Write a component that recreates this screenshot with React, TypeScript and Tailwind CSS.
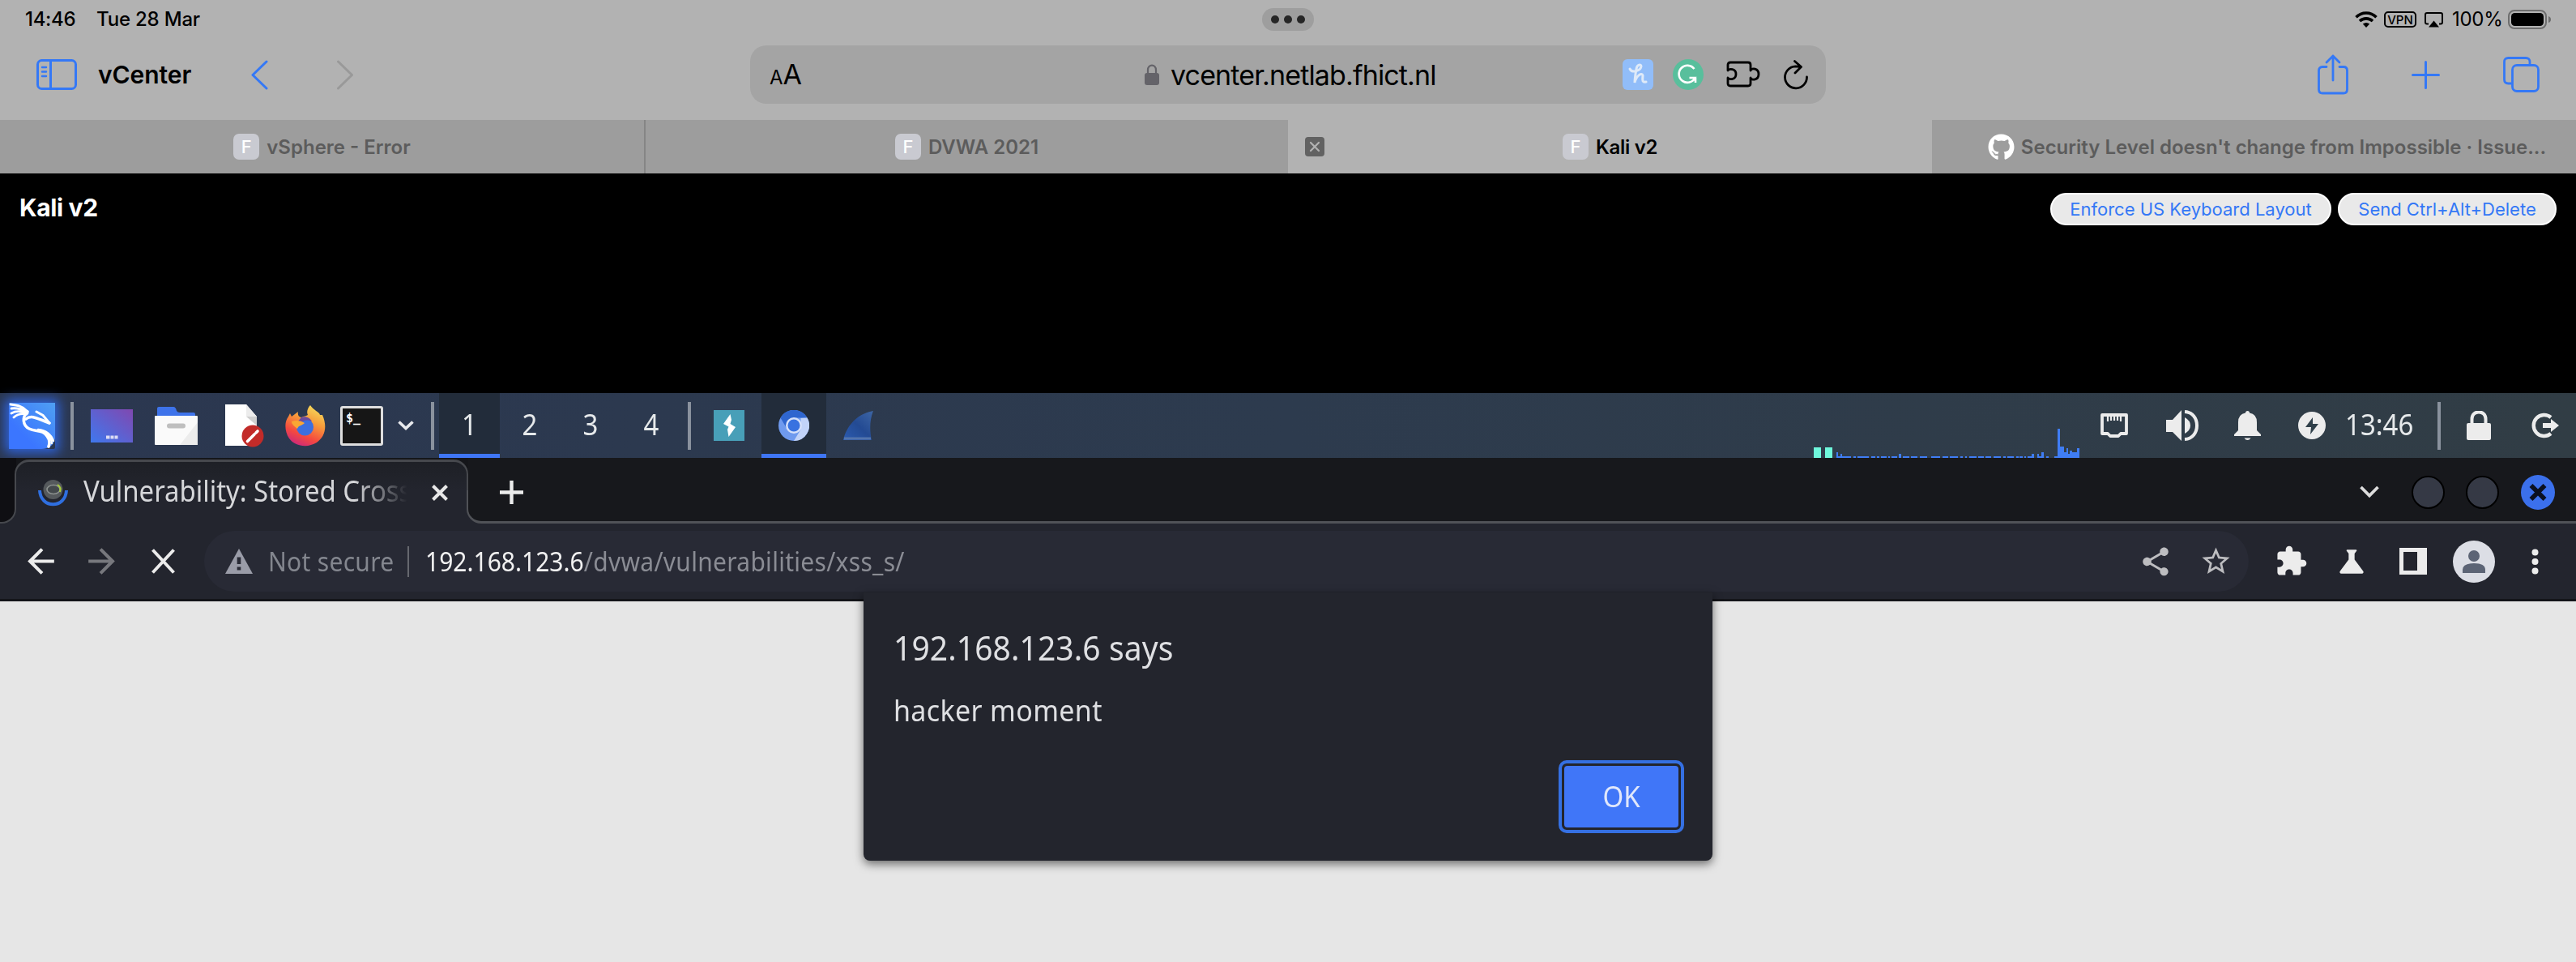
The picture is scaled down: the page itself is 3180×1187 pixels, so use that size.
import type { ReactNode } from "react";
import { FaGithub } from "react-icons/fa";
import {
  MdArrowBack,
  MdArrowForward,
  MdExtension,
  MdScience,
  MdShare,
  MdStarBorder,
} from "react-icons/md";

function Favicon() {
  return (
    <span className="flex size-8 shrink-0 items-center justify-center rounded-[7px] bg-[#c9cad1] text-[22px] leading-none font-medium text-white">
      F
    </span>
  );
}

function StatusBar() {
  return (
    <div className="grid h-12 grid-cols-3 items-center text-[24px] leading-none font-medium text-black">
      <div className="flex pl-[31px]">
        <span className="w-[88px] tracking-[-0.3px]">14:46</span>
        <span className="tracking-[-0.2px]">Tue 28 Mar</span>
      </div>
      <div className="flex h-7 w-[64px] items-center justify-center gap-[6px] justify-self-center rounded-full bg-[#9e9e9e]">
        <i className="size-[10px] rounded-full bg-[#262626]" />
        <i className="size-[10px] rounded-full bg-[#262626]" />
        <i className="size-[10px] rounded-full bg-[#262626]" />
      </div>
      <div className="flex items-center justify-end pr-[30px]">
        <svg width="28" height="20" viewBox="0 0 28 20" fill="none" stroke="#000" strokeWidth="3.6">
          <path d="M1.500 7.200C8.500 .2 19.500 .2 26.500 7.200" />
          <path d="M6 12C10.500 7.800 17.500 7.800 22 12" />
          <path d="M14 20L9.800 15.600Q14 12.200 18.200 15.600Z" fill="#000" stroke="none" />
        </svg>
        <span className="ml-2 flex h-5 w-10 items-center justify-center rounded-[5px] border-2 border-black text-[15px] font-medium">
          VPN
        </span>
        <svg className="ml-[10px]" width="23" height="19" viewBox="0 0 23 19">
          <path d="M5 14.500H3Q1 14.500 1 12.500V3Q1 1 3 1H20Q22 1 22 3V12.500Q22 14.500 20 14.500H18" fill="none" stroke="#000" strokeWidth="2" />
          <path d="M11.500 10.500L18 18.500H5Z" />
        </svg>
        <span className="ml-[11px] w-[69px] text-[24px] font-normal tracking-[-0.3px]">100%</span>
        <svg width="54" height="24" viewBox="0 0 54 24">
          <rect x="1" y="1" width="46" height="22" rx="7" fill="none" stroke="#6e6e6e" strokeWidth="2" />
          <rect x="4" y="4" width="40" height="16" rx="4.500" />
          <path d="M50 8Q53 9 53 12T50 16Z" fill="#6e6e6e" />
        </svg>
      </div>
    </div>
  );
}

function AddressBar() {
  return (
    <div className="ml-[490px] flex h-[72px] w-[1328px] shrink-0 items-center rounded-[20px] bg-[#a4a4a4]">
      <div className="flex w-[487px] items-baseline pl-6 leading-none">
        <span className="text-[24px]">A</span>
        <span className="text-[34px]">A</span>
      </div>
      <svg width="18" height="26" viewBox="0 0 18 26">
        <path d="M4 12V7.500C4 -.3 14 -.3 14 7.500V12" fill="none" stroke="#646369" strokeWidth="2.200" />
        <rect y="11" width="18" height="15" rx="3" fill="#646369" />
      </svg>
      <span className="ml-[14px] w-[558px] pt-[2px] text-[34px] leading-none tracking-[-0.86px] whitespace-nowrap">
        vcenter.netlab.fhict.nl
      </span>
      <svg width="38" height="38" viewBox="0 0 38 38" fill="none">
        <rect width="38" height="38" rx="6" fill="#91bdf9" />
        <path d="M9 12C12 18 22 14 23 9C23 6 18 6 17 12C16 18 15 24 15 29C17 20 24 16 25 20C25 24 23 29 29 28" stroke="#dfeaf8" strokeWidth="3" strokeLinecap="round" />
      </svg>
      <svg className="ml-6" width="38" height="38" viewBox="0 0 38 38" fill="none">
        <circle cx="19" cy="19" r="19" fill="#58bf9c" />
        <path d="M26.500 12A10.500 10.500 0 1 0 27.500 23H20.500M28 29V23" stroke="#fff" strokeWidth="2.600" />
      </svg>
      <svg className="ml-7" width="42" height="34" viewBox="0 0 42 34" fill="none" stroke="#000" strokeWidth="2.800" strokeLinejoin="round">
        <path d="M2 12V5Q2 2 5 2H27Q30 2 30 5V12C31.500 8.500 40 9 40 16.500C40 24 31.500 24.500 30 21V28Q30 31 27 31H5Q2 31 2 28V21C4 23.500 12 23.500 12 16.500C12 9.500 4 9.500 2 12Z" />
      </svg>
      <svg className="ml-[29px]" width="31" height="37" viewBox="0 0 31 37" fill="none" stroke="#000" strokeWidth="2.800" strokeLinecap="round" strokeLinejoin="round">
        <path d="M28.500 21A13.500 13.500 0 1 1 14.500 7.800L21.500 8.500M13.500 1.500L21.500 8.500L14 16" />
      </svg>
    </div>
  );
}

function SafariToolbar() {
  return (
    <div className="flex h-[100px] items-center pt-2 pb-5 pl-[45px] [&>svg]:shrink-0">
      <svg width="50" height="38" viewBox="0 0 50 38" fill="none" stroke="#3478f6" strokeWidth="3">
        <rect x="1.500" y="1.500" width="47" height="35" rx="5" />
        <path d="M17.500 2V36" />
        <path d="M7 10H12M7 15.500H12M7 21H12" strokeWidth="2.400" strokeLinecap="round" />
      </svg>
      <span className="ml-[26px] w-[116px] text-[30px] leading-none font-semibold tracking-[-0.05px]">
        vCenter
      </span>
      <svg className="ml-[72px]" width="22" height="37" viewBox="0 0 22 37" fill="none" stroke="#3478f6" strokeWidth="3" strokeLinecap="round" strokeLinejoin="round">
        <path d="M20 2L3 18.500L20 35" />
      </svg>
      <svg className="ml-[85px]" width="20" height="37" viewBox="0 0 20 37" fill="none" stroke="#999" strokeWidth="3" strokeLinecap="round" strokeLinejoin="round">
        <path d="M1.500 2L18.500 18.500L1.500 35" />
      </svg>
      <AddressBar />
      <svg className="ml-[607px]" width="38" height="50" viewBox="0 0 38 50" fill="none" stroke="#3478f6" strokeWidth="2.800" strokeLinecap="round" strokeLinejoin="round">
        <path d="M11 15.500H6Q1.500 15.500 1.500 20V43.500Q1.500 48 6 48H32Q36.500 48 36.500 43.500V20Q36.500 15.500 32 15.500H27M19 32V2M11 10L19 2L27 10" />
      </svg>
      <svg className="ml-[78px]" width="35" height="35" viewBox="0 0 35 35" stroke="#3478f6" strokeWidth="3" strokeLinecap="round">
        <path d="M17.500 1.500V33.500M1.500 17.500H33.500" />
      </svg>
      <svg className="ml-[78px]" width="45" height="44" viewBox="0 0 45 44" fill="none" stroke="#3478f6" strokeWidth="2.800" strokeLinecap="round">
        <rect x="11.500" y="10.500" width="32" height="32" rx="5.500" />
        <path d="M33 9V6.500Q33 1.500 28 1.500H6.500Q1.500 1.500 1.500 6.500V28Q1.500 33 6.500 33H9.500" />
      </svg>
    </div>
  );
}

function SafariTabs() {
  const idle = "flex h-full items-center justify-center bg-[#9d9d9d] text-[#5c5c5c]";
  return (
    <div className="grid h-[66px] grid-cols-[795px_795px_795px_795px] text-[24px] leading-none font-semibold whitespace-nowrap [&_span+span]:pt-[2px]">
      <div className={idle}>
        <Favicon />
        <span className="ml-[9px]">vSphere - Error</span>
      </div>
      <div className={idle + " border-l-2 border-[#858585]"}>
        <Favicon />
        <span className="ml-[9px]">DVWA 2021</span>
      </div>
      <div className="relative flex h-full items-center justify-center">
        <svg className="absolute left-[21px]" width="24" height="24" viewBox="0 0 24 24">
          <rect width="24" height="24" rx="4" fill="#626262" />
          <path d="M7 7L17 17M17 7L7 17" stroke="#b2b2b2" strokeWidth="2.200" strokeLinecap="round" />
        </svg>
        <Favicon />
        <span className="ml-[9px] tracking-[-0.3px]">Kali v2</span>
      </div>
      <div className={idle + " pl-[32px]"}>
        <FaGithub className="size-[33px] text-white" />
        <span className="ml-[8px] pt-[2px]">Security Level doesn't change from Impossible · Issue...</span>
      </div>
    </div>
  );
}

function PillButton({ children, width }: { children: ReactNode; width: string }) {
  return (
    <button className={`flex h-10 ${width} items-center justify-center rounded-full border-2 border-white bg-[#e9e9e9] text-[22px] leading-none whitespace-nowrap text-[#3478f6]`}>
      {children}
    </button>
  );
}

function ConsoleHeader() {
  return (
    <div className="flex h-[271px] items-start justify-between bg-black pt-6 pr-6 pl-[24px]">
      <h1 className="-mt-px text-[30px] leading-[38px] font-bold tracking-[-0.35px] text-white">Kali v2</h1>
      <div className="flex gap-2">
        <PillButton width="w-[347px]">Enforce US Keyboard Layout</PillButton>
        <PillButton width="w-[270px]">Send Ctrl+Alt+Delete</PillButton>
      </div>
    </div>
  );
}

function Divider({ className }: { className: string }) {
  return <i className={`h-[59px] w-[4px] shrink-0 bg-[#8a929e] ${className}`} />;
}

function Launchers() {
  return (
    <>
      <svg className="-ml-px overflow-visible rounded-[2px] shadow-[0_0_14px_5px_#2f62d8]" width="57" height="57" viewBox="0 0 57 57" fill="none">
        <defs>
          <linearGradient id="kali" x1="0" y1="1" x2="1" y2="0">
            <stop offset=".3" stopColor="#3b76ff" />
            <stop offset="1" stopColor="#4f9ff2" />
          </linearGradient>
        </defs>
        <path d="M0 0H57V44Q54 57 40 57H0Z" fill="url(#kali)" />
        <g stroke="#fff" strokeLinecap="round">
          <path d="M23 11C16 18 17 28 25 32C33 36 42 33 47 41C50 45 51 49 49 54" strokeWidth="3.600" />
          <path d="M36 33C45 34 52 39 55 47M44 37C50 41 53 46 53 50" strokeWidth="2.400" />
          <path d="M21 20C28 14 36 20 50 25" strokeWidth="3.600" />
          <path d="M34 11L42 15.500L50 25" strokeWidth="3" />
          <path d="M2 2C10 3 17 4 22 10M3 7C10 6 16 8 22 11M3 13C10 9 16 11 23 13M6 18C11 13 16 13 22 14" strokeWidth="2.800" />
        </g>
      </svg>
      <Divider className="ml-[19px]" />
      <svg className="ml-[21px]" width="52" height="41" viewBox="0 0 52 41">
        <defs>
          <linearGradient id="desk" x1="0" y1="1" x2="1" y2="0">
            <stop offset="0" stopColor="#3f78ee" />
            <stop offset="1" stopColor="#8048b0" />
          </linearGradient>
        </defs>
        <rect width="52" height="41" fill="url(#desk)" />
        <path d="M19 34.500H23.500M24.500 34.500H28.500M29.500 34.500H33.500" stroke="#dcdcf4" strokeWidth="4" />
      </svg>
      <svg className="ml-[27px]" width="53" height="48" viewBox="0 0 53 48">
        <path d="M3 14V3Q3 1 5 1H23Q26 1 27 6Q28 8 31 8H48Q50 8 50 10V14Z" fill="#3e73ea" />
        <rect y="12" width="53" height="36" rx="1" fill="#fafafa" />
        <path d="M53 20V48H31Z" fill="#ececec" />
        <rect x="15" y="21.500" width="23" height="6" rx="3" fill="#bfbfbf" />
      </svg>
      <svg className="ml-[33px]" width="49" height="53" viewBox="0 0 49 53">
        <path d="M1 0H27L40 15V51H1Z" fill="#fff" />
        <path d="M27 15H40V26Z" fill="#cfcfcf" />
        <path d="M27 0L40 15H27Z" fill="#ececec" />
        <circle cx="35" cy="39" r="13.500" fill="#c22b29" />
        <path d="M28.500 45.500L37 37M39 35L41 33" stroke="#fff" strokeWidth="3.600" strokeLinecap="round" />
      </svg>
      <svg className="ml-[26px]" width="50" height="51" viewBox="0 0 50 51">
        <defs>
          <linearGradient id="fox" x1=".8" y1="0" x2=".35" y2="1">
            <stop offset="0" stopColor="#f6e05e" />
            <stop offset=".4" stopColor="#f79a3a" />
            <stop offset=".75" stopColor="#f4493f" />
            <stop offset="1" stopColor="#cf2a78" />
          </linearGradient>
        </defs>
        <path d="M31 0C37 8 42 8 43 12L46 12C53 28 48 40 39 46C28 53 12 51 5 41C-1 32 -1 20 4 14L6 10L8 14L16 8C15 12 17 15 20 15C24 13 25 14 28 12C26 8 28 3 31 0Z" fill="url(#fox)" />
        <circle cx="24.500" cy="27" r="10.500" fill="#3b6fe0" />
        <path d="M20 15C26 13 31 16 33 20C26 17 22 19 21 21L14 22Z" fill="#6d4a9c" />
        <path d="M8 20C14 18 20 19 24 22C20 26 17 24 15 29C12 26 8 24 8 20Z" fill="#f9a634" />
      </svg>
      <div className="ml-[18px] flex h-[49px] w-[53px] shrink-0 rounded-[3px] border-[3px] border-[#dedede] bg-[#161616] pt-[5px] pl-[4px] font-['DejaVu_Sans_Mono',monospace] text-[15px] leading-none font-bold text-white">
        $_
      </div>
      <svg className="ml-[18px]" width="20" height="14" viewBox="0 0 20 14" fill="none" stroke="#e8eaed" strokeWidth="3.600">
        <path d="M1.500 2.500L10 10.500L18.500 2.500" />
      </svg>
      <Divider className="ml-[21px]" />
    </>
  );
}

const workspaces = ["1", "2", "3", "4"];

/* One bar of the CPU graph: left edge, width, height. */
const cpuLoad: [number, number, number][] = [
  [0, 2, 7], [2, 3, 2], [5, 2, 5], [7, 11, 2], [21, 3, 2], [26, 14, 2], [43, 5, 2], [50, 3, 2], [55, 7, 2],
  [64, 2, 2], [68, 7, 2], [77, 3, 5], [82, 8, 2], [92, 8, 2], [103, 9, 2], [117, 9, 2], [126, 2, 2],
  [131, 7, 2], [140, 10, 2], [153, 3, 2], [159, 2, 2], [164, 9, 2], [175, 7, 2], [184, 7, 2], [194, 9, 2],
  [206, 3, 2], [211, 8, 2], [222, 3, 2], [226, 4, 2], [232, 2, 2], [236, 6, 2], [241, 3, 5], [248, 2, 5],
  [250, 3, 2], [253, 3, 7], [259, 3, 2], [269, 5, 2], [273, 3, 36], [276, 5, 14], [281, 3, 7], [284, 2, 12],
  [286, 3, 5], [288, 3, 9], [290, 8, 7], [297, 3, 12],
];

function DesktopPanel() {
  return (
    <div className="flex h-20 items-center bg-linear-to-r from-[#2b3750] via-[#2d3b4e] to-[#313d45] pl-3 font-['Noto_Sans',sans-serif] text-[#e6e9eb] [&>svg]:shrink-0">
      <Launchers />
      <div className="ml-[6px] flex h-full">
        {workspaces.map((name, i) => (
          <div
            key={name}
            className={
              "flex h-full w-[75px] items-center justify-center text-[33px] leading-none " +
              (i === 0 ? "border-b-[5px] border-[#3f76f5] bg-[#222c3a] pt-[2px]" : "pr-px pb-[3px]")
            }
          >
            <span className="scale-y-[1.09]">{name}</span>
          </div>
        ))}
      </div>
      <Divider className="ml-[7px]" />
      <svg className="ml-[28px]" width="38" height="38" viewBox="0 0 38 38">
        <rect width="38" height="38" fill="#489fb8" />
        <path d="M20.500 5L12 17L18.500 20.500L17 24L18.500 33L27 21L20.500 17L22 12Z" fill="#fff" />
      </svg>
      <div className="ml-[21px] flex h-full w-20 items-center justify-center border-b-[5px] border-[#3f76f5] bg-[#222c3a] pt-[5px]">
        <svg width="38" height="38" viewBox="0 0 38 38">
          <circle cx="19" cy="19" r="19" fill="#6f9aee" />
          <path d="M2.500 9.500A19 19 0 0 1 35.500 9.500H19L11 24Z" fill="#2f66cf" />
          <path d="M35.500 9.500A19 19 0 0 1 19 38L27.500 24V10Z" fill="#c2d3f8" />
          <circle cx="19" cy="19" r="10" fill="#d5e0fa" />
          <circle cx="19" cy="19" r="7.500" fill="#3872e0" />
        </svg>
      </div>
      <svg className="ml-[21px]" width="38" height="36" viewBox="0 0 38 36">
        <defs>
          <linearGradient id="fin" x1="0" y1="1" x2="1" y2="0">
            <stop offset="0" stopColor="#2b5bb0" />
            <stop offset=".5" stopColor="#234a93" />
            <stop offset="1" stopColor="#3e66a4" />
          </linearGradient>
        </defs>
        <path d="M0 36C4 18 18 3 37 0C33 10 32 22 35 36Z" fill="url(#fin)" />
        <path d="M1 34H34" stroke="#5274ad" strokeWidth="3" />
      </svg>
      <div className="flex h-full flex-1 items-end justify-end">
        <div className="mr-[5px] flex gap-[5px]">
          <i className="h-[13px] w-[9px] bg-[#6ff8dc]" />
          <i className="h-[13px] w-[9px] bg-[#6ff8dc]" />
        </div>
        <svg width="300" height="38" viewBox="0 0 300 38" fill="#3f7df5">
          {cpuLoad.map(([x, w, h], i) => (
            <rect key={i} x={x} y={38 - h} width={w} height={h} />
          ))}
        </svg>
      </div>
      <svg className="ml-[26px]" width="34" height="30" viewBox="0 0 34 30" fill="none" stroke="#ececec">
        <path d="M2 2H32V25H25L22 28H12L9 25H2Z" strokeWidth="3.800" strokeLinejoin="round" />
        <path d="M9 4V10M13 4V9M17 4V9M21 4V9M25 4V10" strokeWidth="2.200" />
      </svg>
      <svg className="ml-[47px]" width="41" height="38" viewBox="0 0 41 38" fill="#ececec">
        <path d="M0 12H8L19 0V38L8 27H0Z" />
        <path d="M23 9Q30 13 30 19T23 29Z" />
        <path d="M23 2C43 3 43 35 23 36" fill="none" stroke="#ececec" strokeWidth="4" />
      </svg>
      <svg className="ml-[43px]" width="33" height="36" viewBox="0 0 33 36" fill="#ececec">
        <path d="M16.500 0Q19 0 19 2.500Q28 4 28 14V24L33 29V31H0V29L5 24V14Q5 4 14 2.500Q14 0 16.500 0ZM12.500 33.500H20.500Q19 36 16.500 36T12.500 33.500Z" />
      </svg>
      <svg className="ml-[46px]" width="34" height="34" viewBox="0 0 34 34">
        <circle cx="17" cy="17" r="17" fill="#ececec" />
        <path d="M18 7L9 19H16L15 28L25 15H18Z" fill="#30404a" />
      </svg>
      <span className="-mt-[3px] ml-[24px] w-[88px] scale-y-[1.09] text-[33px] leading-none">13:46</span>
      <Divider className="ml-[26px]" />
      <svg className="ml-[32px]" width="30" height="36" viewBox="0 0 30 36" fill="none">
        <rect y="15" width="30" height="21" rx="2" fill="#ececec" />
        <path d="M6.500 16V10C6.500 -1.500 23.500 -1.500 23.500 10V16" stroke="#ececec" strokeWidth="4" />
      </svg>
      <svg className="mr-[21px] ml-[49px]" width="35" height="32" viewBox="0 0 35 32" fill="none">
        <path d="M25 6A13 13 0 1 0 25 26" stroke="#ececec" strokeWidth="4.400" />
        <path d="M15 13H25V8L35 16L25 24V19H15Z" fill="#ececec" />
      </svg>
    </div>
  );
}

function ChromiumTabStrip() {
  return (
    <div className="flex h-[81px] bg-[#23252e] font-['Noto_Sans',sans-serif]">
      <div className="w-5">
        <div className="h-10 bg-[#0f0f13]" />
        <div className="bg-[#23252e]">
          <div className="h-[41px] rounded-br-[18px] border-r-2 border-b-2 border-[#46484d] bg-[#0f0f13]" />
        </div>
      </div>
      <div className="relative w-[558px]">
        <div className="absolute inset-x-0 top-0 h-10 bg-[#15161a] pt-[2px]">
          <div className="-ml-[2px] h-full rounded-t-[18px] border-x-2 border-t-[3px] border-[#46484d] bg-linear-to-b from-[#1e2026] to-[#23252e]" />
        </div>
        <div className="relative flex h-full items-center pt-[4px] pl-[27px]">
          <svg width="37" height="36" viewBox="0 0 37 36" fill="none">
            <circle cx="18.500" cy="14" r="12" fill="#55595c" />
            <ellipse cx="19" cy="14" rx="8" ry="5.500" fill="#44494c" stroke="#8d9290" strokeWidth="1.600" />
            <path d="M24 8Q29 11 27 17" stroke="#a9cf3a" strokeWidth="2" />
            <path d="M2 15C3 38 34 38 35 15" stroke="#2f6fe0" strokeWidth="4" />
          </svg>
          <div className="-mt-[4px] ml-[19px] w-[408px] overflow-hidden mask-r-from-82% mask-r-to-98%">
            <span className="block origin-left scale-y-[1.09] text-[33px] leading-[48px] tracking-[-0.05px] whitespace-nowrap text-[#d6d7da]">
              Vulnerability: Stored Cross
            </span>
          </div>
          <svg className="ml-[22px]" width="20" height="20" viewBox="0 0 20 20" stroke="#e8e8e8" strokeWidth="4">
            <path d="M1.500 1.500L18.500 18.500M18.500 1.500L1.500 18.500" />
          </svg>
        </div>
      </div>
      <div className="grid flex-1">
        <div className="[grid-area:1/1]">
          <div className="h-10 bg-[#17181c]" />
          <div className="-ml-[2px] h-[41px] rounded-bl-[18px] border-b-[3px] border-l-2 border-[#505257] bg-[#17181c]" />
        </div>
        <div className="flex h-[78px] items-center pt-[6px] pr-[26px] pl-[39px] [grid-area:1/1] [&>svg]:shrink-0">
          <svg width="29" height="29" viewBox="0 0 29 29" stroke="#ececec" strokeWidth="4.400">
            <path d="M14.500 0V29M0 14.500H29" />
          </svg>
          <svg className="ml-auto" width="24" height="16" viewBox="0 0 24 16" fill="none" stroke="#dcdcdc" strokeWidth="3.800">
            <path d="M1.500 2L12 12.500L22.500 2" />
          </svg>
          <i className="ml-[40px] size-[41px] rounded-full border-2 border-black bg-[#353945]" />
          <i className="ml-[26px] size-[41px] rounded-full border-2 border-black bg-[#353945]" />
          <svg className="ml-[27px]" width="42" height="43" viewBox="0 0 42 43">
            <ellipse cx="21" cy="21.500" rx="21" ry="21.500" fill="#3b70ec" />
            <path d="M12.500 13L29.500 30M29.500 13L12.500 30" stroke="#0b1020" strokeWidth="5.600" />
          </svg>
        </div>
      </div>
    </div>
  );
}

function ChromiumToolbar() {
  return (
    <div className="flex h-[96px] items-center border-b-[3px] border-[#141519] bg-[#23252e] font-['Noto_Sans',sans-serif] [&>svg]:shrink-0">
      <MdArrowBack className="ml-[26px] size-[49px] text-[#ececec]" />
      <MdArrowForward className="ml-[26px] size-[49px] text-[#77787d]" />
      <svg className="ml-[37px]" width="29" height="31" viewBox="0 0 29 31" stroke="#ececec" strokeWidth="4">
        <path d="M1.500 1.500L27.500 29.500M27.500 1.500L1.500 29.500" />
      </svg>
      <div className="ml-[36px] flex h-[75px] w-[2524px] shrink-0 items-center rounded-full bg-[#282a35] text-[30px] leading-none [&>svg]:shrink-0">
        <svg className="ml-[26px]" width="34" height="31" viewBox="0 0 34 31">
          <path d="M17 0L34 31H0Z" fill="#9a9ca8" />
          <path d="M17 10.500V19M17 22.500V26.500" stroke="#282a35" strokeWidth="4.600" />
        </svg>
        <span className="ml-[19px] w-[172px] scale-y-[1.1] tracking-[0.3px] whitespace-nowrap text-[#83868e]">Not secure</span>
        <i className="h-[38px] w-[2px] bg-[#66686f]" />
        <span className="ml-[20px] w-[2101px] scale-y-[1.1] tracking-[0.28px] whitespace-nowrap text-[#8a8c94]">
          <span className="tracking-normal text-[#f1f1f1]">192.168.123.6</span>/dvwa/vulnerabilities/xss_s/
        </span>
        <MdShare className="ml-[14px] size-[42px] text-[#bdbdc0]" />
        <MdStarBorder className="ml-[33px] size-[41px] text-[#bdbdc0]" />
      </div>
      <MdExtension className="ml-[32px] size-[41px] text-[#ececec]" />
      <MdScience className="ml-[32px] size-[44px] text-[#ececec]" />
      <svg className="ml-[37px]" width="34" height="33" viewBox="0 0 34 33">
        <path d="M0 0H34V33H0ZM5 5V28H22V5Z" fill="#ececec" fillRule="evenodd" />
      </svg>
      <svg className="ml-[32px]" width="52" height="52" viewBox="0 0 52 52" fill="#5c6475">
        <circle cx="26" cy="26" r="26" fill="#dcdee5" />
        <circle cx="26" cy="19" r="7" />
        <path d="M12 40V36Q12 28 26 28T40 36V40Z" />
      </svg>
      <svg className="ml-[45px]" width="9" height="32" viewBox="0 0 9 32" fill="#ececec">
        <circle cx="4.500" cy="4.500" r="4" />
        <circle cx="4.500" cy="16" r="4" />
        <circle cx="4.500" cy="27.500" r="4" />
      </svg>
    </div>
  );
}

function AlertDialog() {
  return (
    <div className="absolute -top-[11px] left-[1066px] flex h-[331px] w-[1048px] flex-col rounded-b-[8px] bg-[#23252d] pr-[35px] pl-[37px] font-['Noto_Sans',sans-serif] text-[#dfe0e3] shadow-[0_4px_12px_rgba(0,0,0,0.55)]">
      <h2 className="mt-[48px] scale-y-[1.09] text-[39px] leading-[40px]">
        <span className="tracking-[0.1px]">192.168.123.6 says</span>
      </h2>
      <p className="mt-[37px] scale-y-[1.05] text-[34px] leading-[40px] tracking-[0.35px]">hacker moment</p>
      <button className="mt-[42px] flex h-[90px] w-[155px] self-end rounded-[10px] border-[4px] border-[#3570e2] p-[3px]">
        <span className="flex flex-1 items-center justify-center rounded-[4px] bg-[#4076f8] pb-[2px] text-[33px] leading-none text-[#e0e7fb]">
          <span className="scale-y-[1.09]">OK</span>
        </span>
      </button>
    </div>
  );
}

export default function App() {
  return (
    <div className="flex h-[1187px] w-[3180px] flex-col overflow-hidden bg-[#b2b2b2] font-['Inter',sans-serif] text-black">
      <StatusBar />
      <SafariToolbar />
      <SafariTabs />
      <ConsoleHeader />
      <DesktopPanel />
      <ChromiumTabStrip />
      <ChromiumToolbar />
      <main className="relative flex-1 bg-[#e6e6e6]">
        <AlertDialog />
      </main>
    </div>
  );
}
